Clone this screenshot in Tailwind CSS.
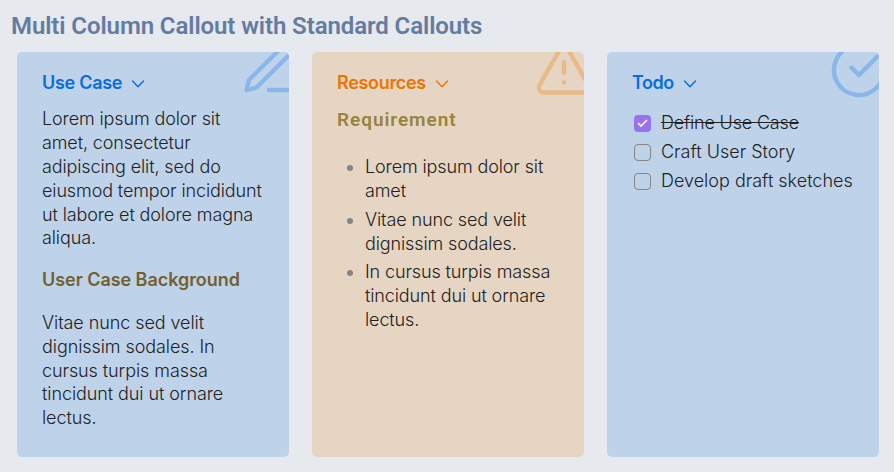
<!DOCTYPE html>
<html lang="en">
<head>
<meta charset="utf-8">
<title>Multi Column Callout</title>
<script src="https://cdn.jsdelivr.net/npm/@tailwindcss/browser@4"></script>
</head>
<body class="h-[472px] overflow-hidden bg-[#e6e9ee] font-['Inter',sans-serif] text-[18px] leading-[23.8px] font-light text-[#222222]">
<h1 class="h-[52px] pl-[11px] pt-[11px] font-['Roboto',sans-serif] text-[24px] leading-[30px] font-semibold tracking-[-0.09px] whitespace-nowrap text-[#647ba2]">Multi Column Callout with Standard Callouts</h1>
<main class="ml-[17px] grid h-[405px] w-[862px] grid-cols-3 gap-[23px]">
  <section class="relative overflow-hidden rounded-[5px] bg-[#bed3ea] pl-[25px] pt-[19px]">
    <svg class="absolute -right-[10px] -top-[12px] size-[60px] text-[#8ab6e9]" viewBox="0 0 24 24" fill="none" stroke="currentColor" stroke-width="1.75" stroke-linecap="round" stroke-linejoin="round"><path d="M12 20h9M16.5 3.5a2.12 2.12 0 0 1 3 3L7 19l-4 1 1-4Z"/></svg>
    <div class="flex h-6 items-center gap-[9px] font-semibold text-[#086ddd]"><h2 class="tracking-[-0.28px]">Use Case</h2><svg class="mt-px h-2 w-[14px]" viewBox="0 0 14 8" fill="none" stroke="currentColor" stroke-width="1.4" stroke-linecap="round" stroke-linejoin="round"><path d="M1.5 1 7 6.7 12.5 1"/></svg></div>
    <p class="mt-[12.4px] tracking-[-0.12px] whitespace-nowrap">Lorem ipsum dolor sit<br>amet, consectetur<br>adipiscing elit, sed do<br>eiusmod tempor incididunt<br>ut labore et dolore magna<br>aliqua.</p>
    <h3 class="mt-[18px] font-semibold tracking-[-0.05px] text-[#73602f]">User Case Background</h3>
    <p class="mt-[19px] tracking-[-0.08px] whitespace-nowrap">Vitae nunc sed velit<br>dignissim sodales. In<br>cursus turpis massa<br>tincidunt dui ut ornare<br>lectus.</p>
  </section>
  <section class="relative overflow-hidden rounded-[5px] bg-[#e6d5c3] pl-[25px] pt-[19px]">
    <svg class="absolute -right-[10px] -top-[12px] size-[60px] text-[#e9b987]" viewBox="0 0 24 24" fill="none" stroke="currentColor" stroke-width="1.75" stroke-linecap="round" stroke-linejoin="round"><path d="m21.73 18-8-14a2 2 0 0 0-3.48 0l-8 14A2 2 0 0 0 4 21h16a2 2 0 0 0 1.73-3ZM12 9v4M12 17h.01"/></svg>
    <div class="flex h-6 items-center gap-[9px] font-semibold text-[#ec7500]"><h2 class="tracking-[-0.32px]">Resources</h2><svg class="mt-px h-2 w-[14px]" viewBox="0 0 14 8" fill="none" stroke="currentColor" stroke-width="1.4" stroke-linecap="round" stroke-linejoin="round"><path d="M1.5 1 7 6.7 12.5 1"/></svg></div>
    <h3 class="mt-[13px] font-['Roboto',sans-serif] text-[19px] font-semibold tracking-[0.95px] text-[#98843f]">Requirement</h3>
    <ul class="mt-[23.4px] flex flex-col gap-[5px] tracking-[-0.12px] whitespace-nowrap">
      <li class="flex gap-[12px] pl-[10px]"><span class="mt-[10px] size-[6px] rounded-full bg-[#858585]"></span><span>Lorem ipsum dolor sit<br>amet</span></li>
      <li class="flex gap-[12px] pl-[10px]"><span class="mt-[10px] size-[6px] rounded-full bg-[#858585]"></span><span>Vitae nunc sed velit<br>dignissim sodales.</span></li>
      <li class="flex gap-[12px] pl-[10px]"><span class="mt-[10px] size-[6px] rounded-full bg-[#858585]"></span><span>In cursus turpis massa<br>tincidunt dui ut ornare<br>lectus.</span></li>
    </ul>
  </section>
  <section class="relative overflow-hidden rounded-[5px] bg-[#bed3ea] pl-[25px] pt-[19px]">
    <svg class="absolute -right-[10px] -top-[12px] size-[60px] text-[#8ab6e9]" viewBox="0 0 24 24" fill="none" stroke="currentColor" stroke-width="1.75" stroke-linecap="round" stroke-linejoin="round"><path d="M22 11.08V12a10 10 0 1 1-5.93-9.14M22 4 12 14.01l-3-3"/></svg>
    <div class="flex h-6 items-center gap-[9px] font-semibold text-[#086ddd]"><h2 class="tracking-[-0.5px]">Todo</h2><svg class="mt-px h-2 w-[14px]" viewBox="0 0 14 8" fill="none" stroke="currentColor" stroke-width="1.4" stroke-linecap="round" stroke-linejoin="round"><path d="M1.5 1 7 6.7 12.5 1"/></svg></div>
    <ul class="mt-[16px] flex flex-col gap-[5.2px] whitespace-nowrap">
      <li class="flex gap-[10px] pl-[2px]"><span class="mt-[4px] flex size-[17px] items-center justify-center rounded-[4px] bg-[#9873f0]"><svg class="size-[11px]" viewBox="0 0 11 11" fill="none" stroke="white" stroke-width="1.7"><path d="m1 5 3 3 6-6"/></svg></span><span class="tracking-[-0.18px] line-through">Define Use Case</span></li>
      <li class="flex gap-[10px] pl-[2px]"><span class="mt-[4px] size-[17px] rounded-[4px] border border-[#858585]"></span><span>Craft User Story</span></li>
      <li class="flex gap-[10px] pl-[2px]"><span class="mt-[4px] size-[17px] rounded-[4px] border border-[#858585]"></span><span>Develop draft sketches</span></li>
    </ul>
  </section>
</main>
</body>
</html>
